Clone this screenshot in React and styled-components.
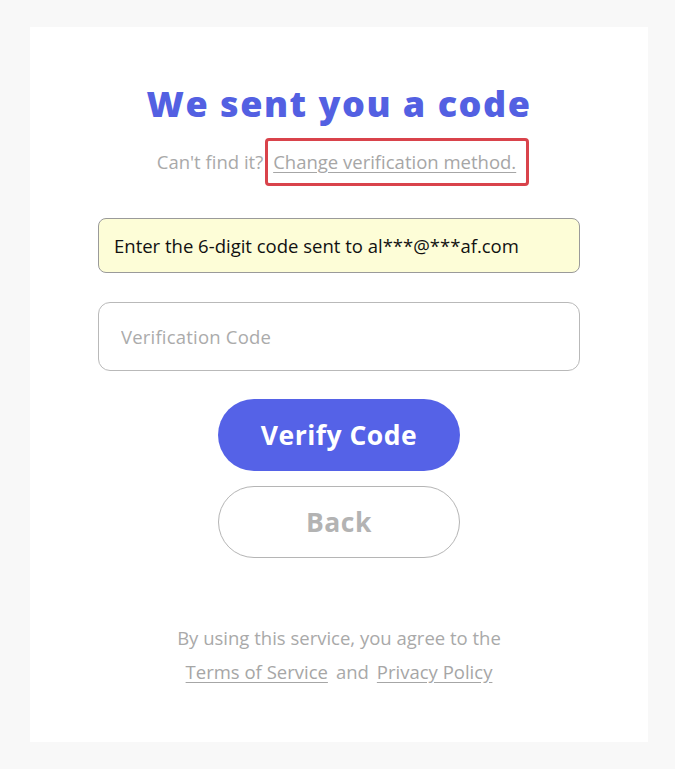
import styled, { createGlobalStyle } from "styled-components"

const GlobalStyle = createGlobalStyle`
body{
    margin: 0;
    background: #f8f8f8;
    font-family: 'Open Sans', 'Noto Sans', sans-serif;
}
`

export default function App() {
    return (
        <Page>
            <GlobalStyle />
            <Card>
                <Title>We sent you a code</Title>
                <Sub>
                    Can't find it?
                    <Highlight>
                        <TextLink>Change verification method.</TextLink>
                    </Highlight>
                </Sub>
                <Notice>Enter the 6-digit code sent to al***@***af.com</Notice>
                <CodeInput placeholder="Verification Code" />
                <Buttons>
                    <PillButton primary>Verify Code</PillButton>
                    <PillButton>Back</PillButton>
                </Buttons>
                <Legal>
                    <p>By using this service, you agree to the</p>
                    <p>
                        <TextLink>Terms of Service</TextLink>
                        <Joiner>and</Joiner>
                        <TextLink>Privacy Policy</TextLink>
                    </p>
                </Legal>
            </Card>
        </Page>
    )
}

const Page = styled.div`
padding: 27px 27px 27px 30px;
`

const Card = styled.div`
width: 618px;
height: 715px;
box-sizing: border-box;
background: #ffffff;
display: flex;
flex-direction: column;
align-items: center;
padding: 55px 68px 0;
`

const Title = styled.h1`
margin: 0;
font-family: 'Open Sans', sans-serif;
font-weight: 800;
font-size: 36px;
line-height: 44px;
color: #5360e2;
letter-spacing: 1.5px;
`

const Sub = styled.div`
margin-top: 12px;
margin-left: 8px;
display: flex;
align-items: center;
font-size: 18.5px;
line-height: 24px;
color: #a9a9a9;
`

const Highlight = styled.span`
margin-left: 2px;
border: 3px solid #d9434b;
border-radius: 4px;
padding: 9px 10px 9px 5px;
`

const TextLink = styled.a`
color: #a6a6a6;
text-decoration: underline;
text-underline-offset: 3px;
cursor: pointer;
`

const Joiner = styled.span`
margin: 0 8px;
`

const Notice = styled.div`
margin-top: 32px;
width: 100%;
height: 55px;
box-sizing: border-box;
background: #fdfdd7;
border: 1px solid #9a9a9a;
border-radius: 8px;
display: flex;
align-items: center;
padding: 0 15px;
font-size: 18.5px;
color: #111111;
`

const CodeInput = styled.input`
margin-top: 29px;
width: 100%;
height: 69px;
box-sizing: border-box;
border: 1px solid #b9b9b9;
border-radius: 12px;
padding: 0 22px;
font-family: 'Open Sans', sans-serif;
font-size: 18.5px;
letter-spacing: 0.2px;
outline: none;
&::placeholder{
    color: #ababab;
}
`

const Buttons = styled.div`
margin-top: 28px;
display: flex;
flex-direction: column;
gap: 15px;
`

const PillButton = styled.button`
width: 242px;
height: 72px;
border-radius: 36px;
font-family: 'Open Sans', sans-serif;
font-weight: 700;
font-size: 26.5px;
letter-spacing: 0.5px;
cursor: pointer;
background: ${props => props.primary ? "#5562e7" : "#ffffff"};
color: ${props => props.primary ? "#ffffff" : "#b3b3b3"};
border: ${props => props.primary ? "none" : "1px solid #b5b5b5"};
`

const Legal = styled.div`
margin-top: 63px;
text-align: center;
font-size: 18.5px;
color: #a9a9a9;
p{
    margin: 0;
    line-height: 34px;
}
`
